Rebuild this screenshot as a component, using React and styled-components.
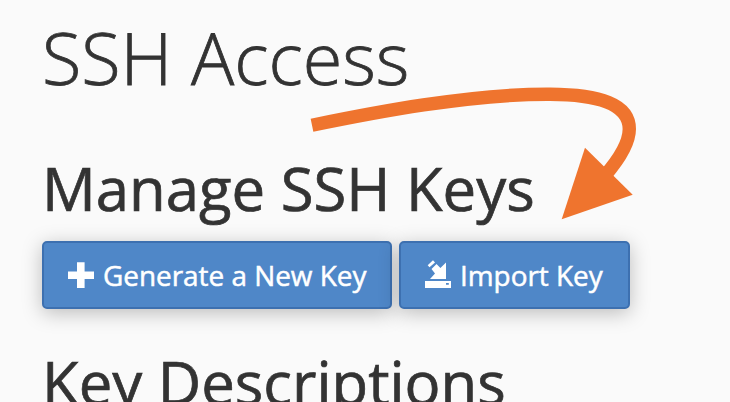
import React from "react";
import styled, { createGlobalStyle } from "styled-components";

const GlobalStyle = createGlobalStyle`
  body { margin: 0; background: #fafafa; overflow: hidden; }
`;

const Page = styled.main`
  box-sizing: border-box;
  display: flow-root;
  position: relative;
  height: 402px;
  padding-left: 42px;
  overflow: hidden;
  background: #fafafa;
  color: #333;
  font-family: "Open Sans", sans-serif;
`;

const Title = styled.h1`
  margin: 10px 0 0;
  height: 94px;
  line-height: 94px;
  font-size: 72px;
  font-weight: 300;
  white-space: nowrap;
  -webkit-text-stroke: 0.8px #333;
`;

const Heading = styled.h2`
  margin: ${(p) => p.$top}px 0 0;
  height: 80px;
  line-height: 80px;
  font-size: 59.85px;
  font-weight: 400;
  white-space: nowrap;
  -webkit-text-stroke: 0.7px #333;
`;

const Actions = styled.div`
  display: flex;
  gap: 7px;
  margin-top: 13px;
`;

const Button = styled.button`
  box-sizing: border-box;
  display: flex;
  align-items: center;
  width: ${(p) => p.$width}px;
  height: 68px;
  padding: 0 0 0 24px;
  border: 2px solid #3d70b0;
  border-radius: 5px;
  background: #4f87c8;
  color: #fff;
  font: 400 27.9px "Open Sans", sans-serif;
  white-space: nowrap;
  -webkit-text-stroke: 0.5px #fff;
  box-shadow: 0 4px 20px rgba(0, 0, 0, 0.25);
`;

const Icon = styled.svg`
  flex: none;
  width: 26px;
  height: 28px;
  margin-right: 9px;
  overflow: visible;
  fill: #fff;
`;

const Arrow = styled.svg`
  position: absolute;
  left: 0;
  top: 0;
  pointer-events: none;
`;

function PlusIcon() {
  return (
    <Icon viewBox="0 0 26 28">
      <path d="M9 1.3h7.6v9.3H26v7.5h-9.4V27H9v-8.9H0v-7.5h9z" />
    </Icon>
  );
}

function ImportIcon() {
  return (
    <Icon viewBox="0 0 26 28">
      <path d="M2.7 4.2 8-.7l2 2.1-5.5 4.8z" />
      <path d="M6.5 8l5-5 3.9 4L21 1.5V18H5l5-5.5z" />
      <path fillRule="evenodd" d="M0 20h26v7H0zM21 22v1.8h2.8V22z" />
    </Icon>
  );
}

export default function App() {
  return (
    <>
      <GlobalStyle />
      <Page>
        <Title>SSH Access</Title>
        <Heading $top={44}>Manage SSH Keys</Heading>
        <Actions>
          <Button $width={350}>
            <PlusIcon />
            Generate a New Key
          </Button>
          <Button $width={231}>
            <ImportIcon />
            Import Key
          </Button>
        </Actions>
        <Heading $top={33}>Key Descriptions</Heading>
        <Arrow width="730" height="402" viewBox="0 0 730 402">
          <path
            d="M312 125.3C372 113 470 93.8 550 94.2C600 94.5 629.3 104 629.3 129C629.3 141 621 157 605 175.5"
            fill="none"
            stroke="#ef742e"
            strokeWidth="13.4"
          />
          <path d="M561.7 219.3L585 147.7L632.7 194.7Z" fill="#ef742e" />
        </Arrow>
      </Page>
    </>
  );
}
